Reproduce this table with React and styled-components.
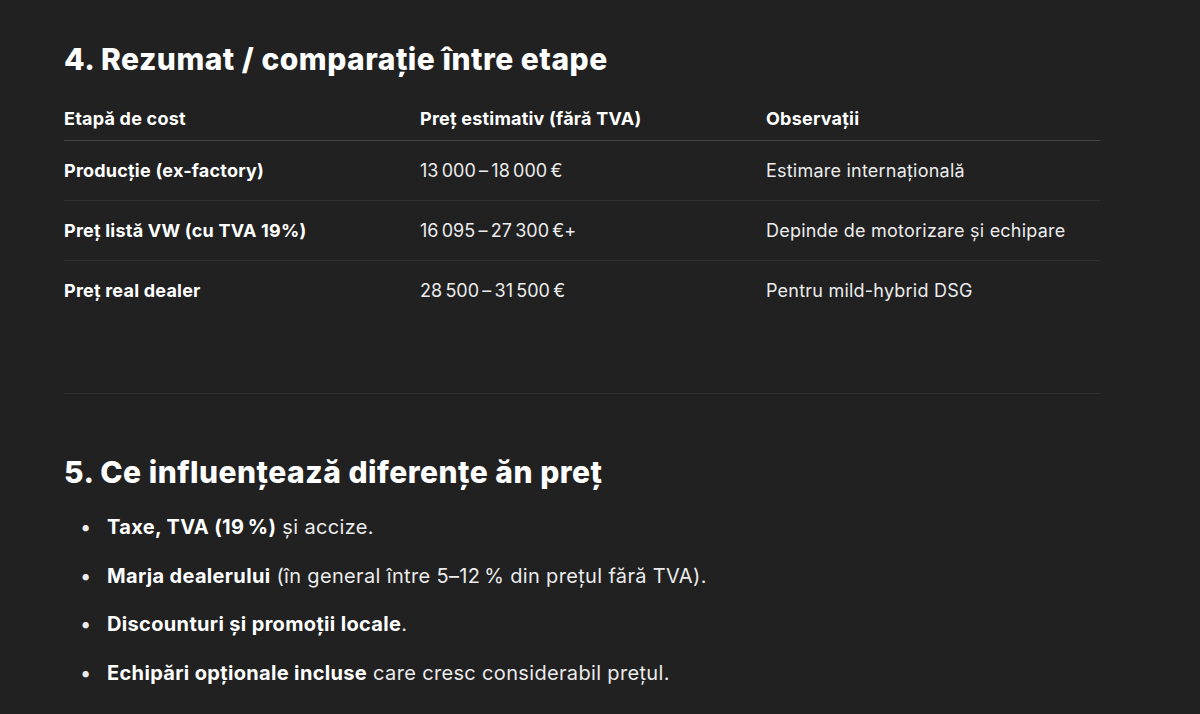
import React from "react";
import styled, { createGlobalStyle } from "styled-components";

const Global = createGlobalStyle`
  html, body { margin: 0; padding: 0; background: #212121; }
  body { font-family: Inter, "Noto Sans", sans-serif; color: #ececec; -webkit-font-smoothing: antialiased; }
`;

const Page = styled.div`
  width: 1200px;
  height: 714px;
  overflow: hidden;
  box-sizing: border-box;
  padding: 39px 100px 0 64px;
  background: #212121;
`;

const H2 = styled.h2`
  margin: 0;
  font-size: 30px;
  line-height: 40px;
  font-weight: 800;
  letter-spacing: 0.5px;
  color: #ffffff;
`;

const Table = styled.div`
  margin-top: 27px;
  display: grid;
  grid-template-columns: 356px 346px 1fr;
  font-size: 18px;
  line-height: 26px;
  letter-spacing: 0.22px;
`;

const Cell = styled.div`
  padding: ${(p) => (p.$head ? "0 0 8px" : "17px 0 16px")};
  font-weight: ${(p) => (p.$bold ? 700 : 400)};
  color: ${(p) => (p.$bold ? "#ffffff" : "#ececec")};
  border-bottom: 1px solid
    ${(p) => (p.$head ? "#444444" : p.$last ? "transparent" : "#303030")};
`;

const Rule = styled.hr`
  margin: 72px 0 0;
  border: 0;
  border-top: 1px solid #303030;
`;

const Section = styled.div`
  margin-top: 58px;
`;

const List = styled.ul`
  margin: 21px 0 0;
  padding: 0 0 0 43px;
  list-style: none;
  font-size: 20px;
  line-height: 28px;
  letter-spacing: 0.34px;
  color: #ececec;
`;

const Item = styled.li`
  margin: 0 0 20.5px;
  &::before {
    content: "•";
    display: inline-block;
    width: 27px;
    margin-left: -27px;
    color: #ececec;
  }
`;

const B = styled.strong`
  font-weight: 700;
  color: #ffffff;
`;

const nb = "\u202F";
const rows = [
  ["Producție (ex-factory)", `13${nb}000${nb}–${nb}18${nb}000${nb}€`, "Estimare internațională"],
  ["Preț listă VW (cu TVA 19%)", `16${nb}095${nb}–${nb}27${nb}300${nb}€+`, "Depinde de motorizare și echipare"],
  ["Preț real dealer", `28${nb}500${nb}–${nb}31${nb}500${nb}€`, "Pentru mild-hybrid DSG"],
];

export default function App() {
  return (
    <>
      <Global />
      <Page>
        <H2>4. Rezumat / comparație între etape</H2>
        <Table>
          <Cell $head $bold>Etapă de cost</Cell>
          <Cell $head $bold>Preț estimativ (fără TVA)</Cell>
          <Cell $head $bold>Observații</Cell>
          {rows.map((r, i) => (
            <React.Fragment key={i}>
              <Cell $bold $last={i === rows.length - 1}>{r[0]}</Cell>
              <Cell $last={i === rows.length - 1}>{r[1]}</Cell>
              <Cell $last={i === rows.length - 1}>{r[2]}</Cell>
            </React.Fragment>
          ))}
        </Table>
        <Rule />
        <Section>
          <H2>5. Ce influențează diferențe ăn preț</H2>
          <List>
            <Item><B>Taxe, TVA (19{nb}%)</B> și accize.</Item>
            <Item><B>Marja dealerului</B> (în general între 5–12{nb}% din prețul fără TVA).</Item>
            <Item><B>Discounturi și promoții locale</B>.</Item>
            <Item><B>Echipări opționale incluse</B> care cresc considerabil prețul.</Item>
          </List>
        </Section>
      </Page>
    </>
  );
}
